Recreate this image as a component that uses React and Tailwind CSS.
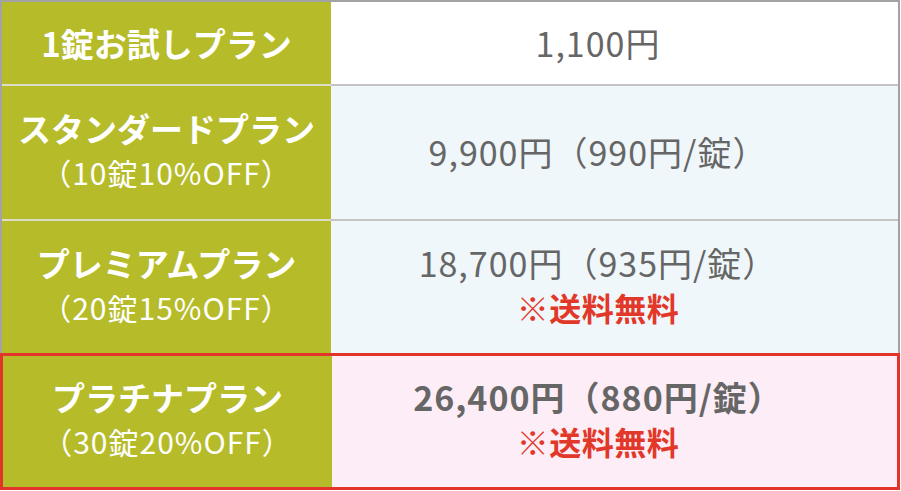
const FONT = "font-['Noto_Sans_CJK_JP','Noto_Sans',sans-serif]";

function PlanCell({ name, note, className = "" }) {
  return (
    <div
      className={`w-[329px] shrink-0 bg-[#b6bb29] flex flex-col items-center justify-center text-white ${note ? "pb-[5px]" : ""} ${className}`}
    >
      <p className="text-[33px] font-bold leading-[44px]">{name}</p>
      {note && (
        <p className="text-[30px] font-normal leading-[44px] tracking-[1px]">{note}</p>
      )}
    </div>
  );
}

function FreeShipping() {
  return (
    <p className="text-[32px] font-bold leading-[44px] tracking-[0.5px] text-[#e2382a]">
      ※送料無料
    </p>
  );
}

export default function App() {
  return (
    <div className={`w-[901px] h-[491px] bg-white ${FONT}`}>
      {/* gray-framed rows */}
      <div className="w-[900px] border-t-2 border-x-2 border-[#a3a3a3]">
        <div className="flex h-[84px]">
          <PlanCell name="1錠お試しプラン" className="border-b-2 border-[#dcdcc8]" />
          <div className="flex-1 bg-white flex items-center justify-center pr-[33px] border-b-2 border-[#c4c4c4]">
            <p className="text-[34px] leading-[44px] tracking-[1px] text-[#666]">1,100円</p>
          </div>
        </div>
        <div className="flex h-[135px]">
          <PlanCell
            name="スタンダードプラン"
            note="（10錠10%OFF）"
            className="border-b-2 border-[#dcdcc8]"
          />
          <div className="flex-1 bg-[#eff7fa] flex items-center justify-center pr-[33px] pb-[2px] border-b-2 border-[#c4c4c4]">
            <p className="text-[34px] leading-[44px] tracking-[1px] text-[#666]">
              9,900円（990円/錠）
            </p>
          </div>
        </div>
        <div className="flex h-[132px]">
          <PlanCell name="プレミアムプラン" note="（20錠15%OFF）" />
          <div className="flex-1 bg-[#eff7fa] flex flex-col items-center justify-center pr-[33px] pb-[4px]">
            <p className="text-[34px] leading-[44px] tracking-[1px] text-[#666]">
              18,700円（935円/錠）
            </p>
            <FreeShipping />
          </div>
        </div>
      </div>

      {/* highlighted row */}
      <div className="w-[900px] h-[137px] flex border-[3px] border-[#e2342a]">
        <PlanCell name="プラチナプラン" note="（30錠20%OFF）" className="w-[328px]" />
        <div className="flex-1 bg-[#fdedf6] flex flex-col items-center justify-center pr-[33px] pb-[5px]">
          <p className="text-[34px] font-bold leading-[44px] tracking-[1px] text-[#666]">
            26,400円（880円/錠）
          </p>
          <FreeShipping />
        </div>
      </div>
    </div>
  );
}
